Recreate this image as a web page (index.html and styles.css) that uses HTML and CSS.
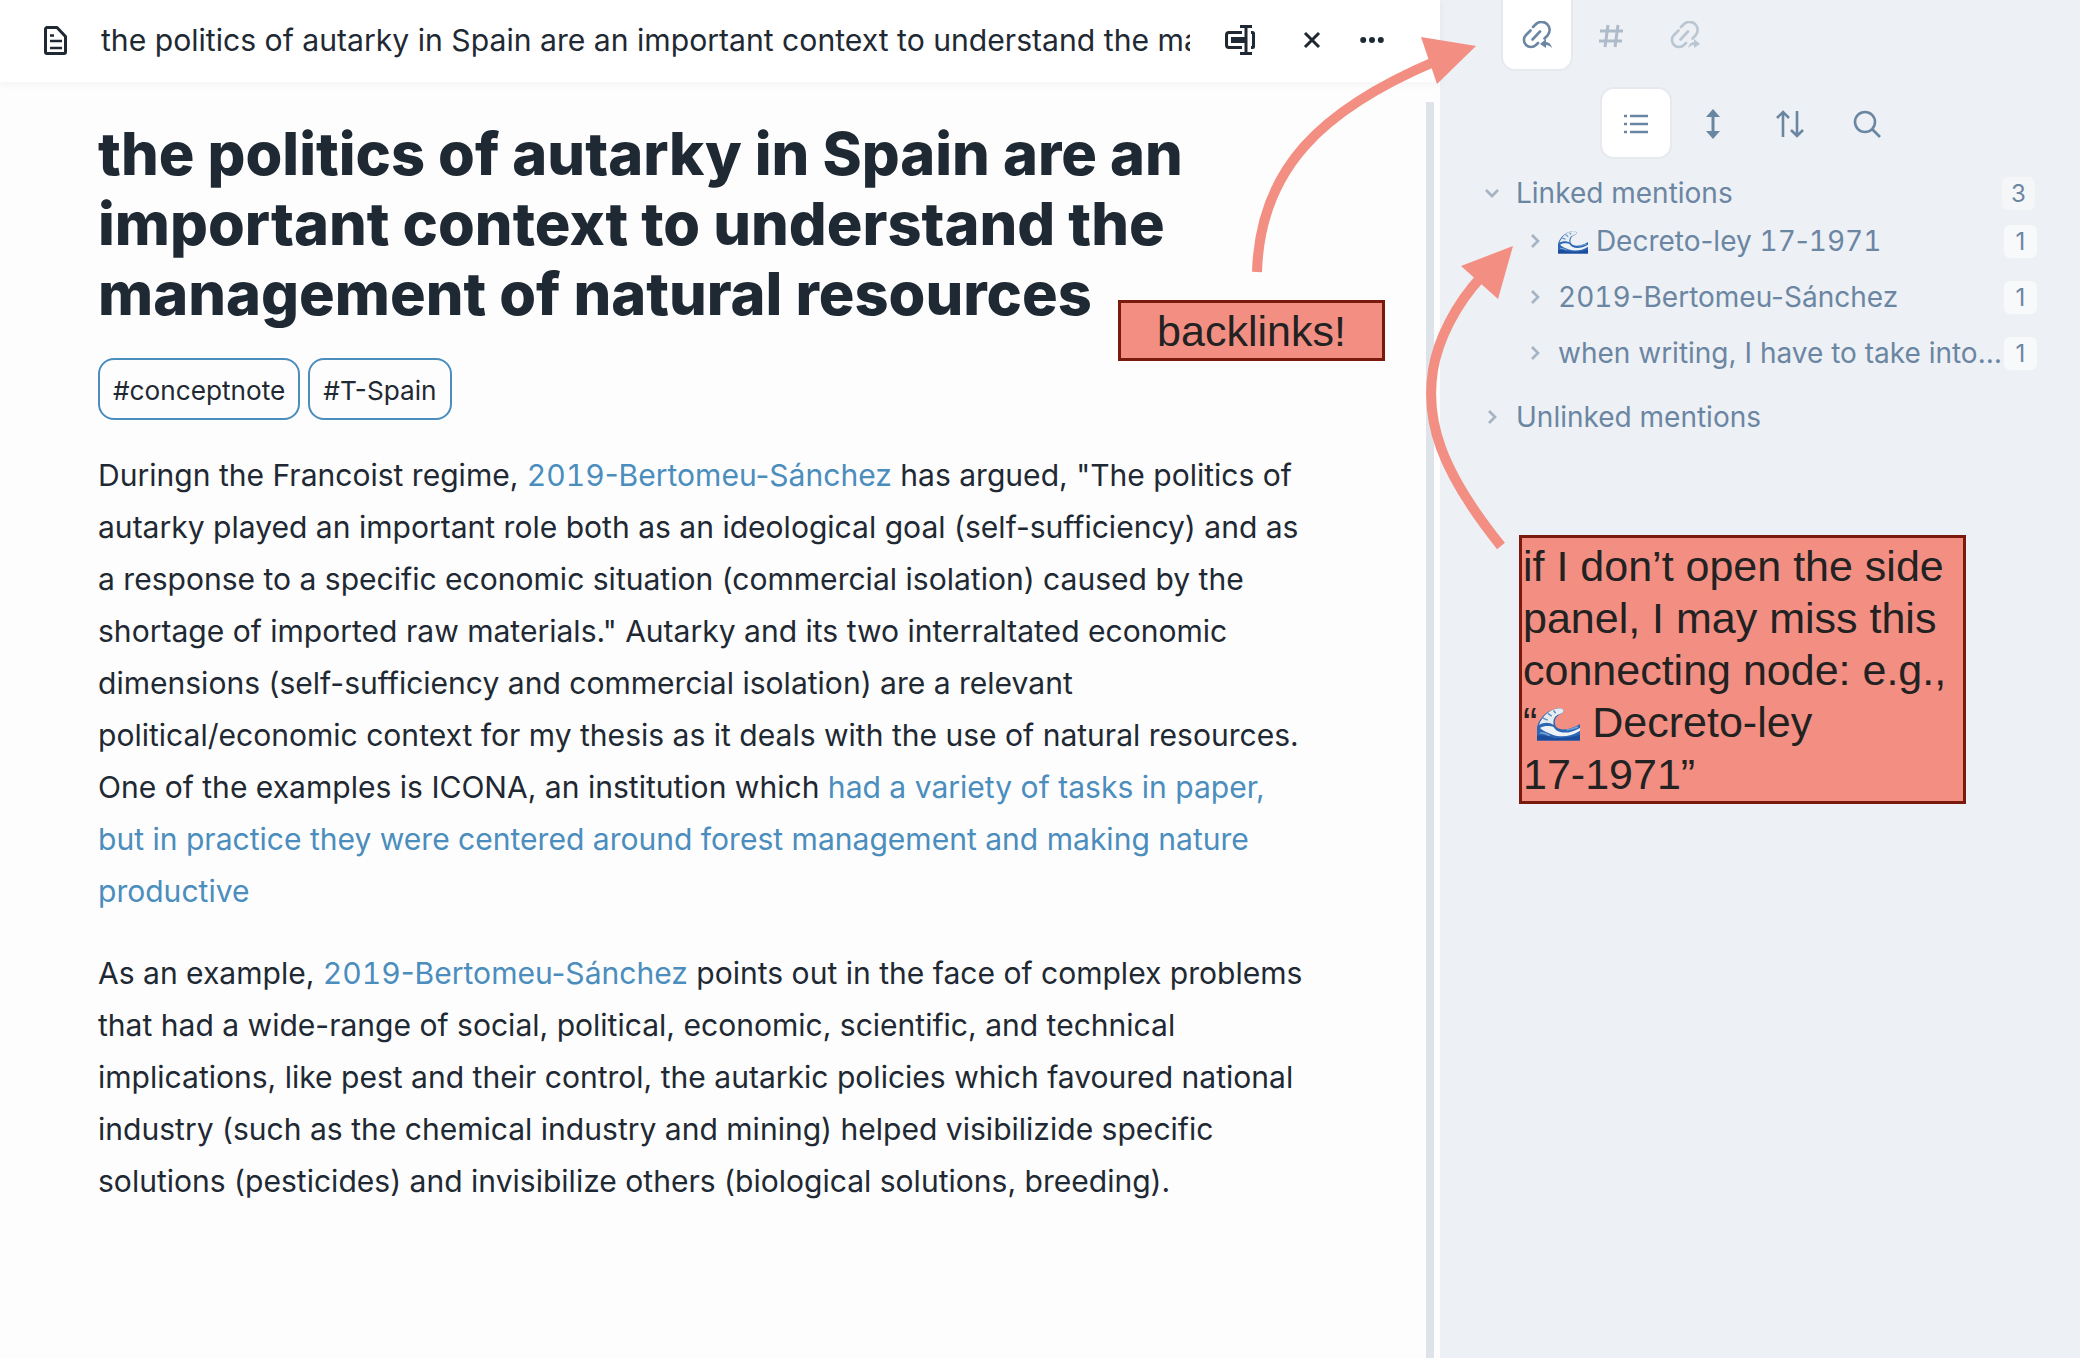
FILE: index.html
```html
<!DOCTYPE html>
<html lang="en">
<head>
    <meta charset="UTF-8">
    <title>Backlinks</title>
    <link rel="stylesheet" href="styles.css">
</head>
<body>
    <svg class="defs" width="0" height="0">
        <symbol id="wave" viewBox="0 0 44 34">
            <path d="M0 34V20C3 9 13 1 24 1c5 1 4 5 0 6-5 2-7 7-5 12 3 5 14 5 25-2v17z" fill="#2c66b4"/>
            <path d="M2 18C6 8 14 1 24 1c5 1 4 5-1 6-5 1-7 6-6 11-4-3-10-3-15 0z" fill="#e6edf1"/>
            <path d="M6 11l5 2M11 6l4 3M17 3l2 3" stroke="#5c8cc4" stroke-width="1.5"/>
            <path d="M3 21c5-3 11-2 14-1 4 7 15 8 27 1v3c-9 6-20 7-28 4-5-2-10-4-13-7z" fill="#edf3f6"/>
            <path d="M0 34v-5c6-1 10 0 16 2 8 1 18 0 28-3v6z" fill="#1b4d9c"/>
            <path d="M3 26c4 0 7 1 10 3M30 23c4 0 8-2 12-3" stroke="#7aa5d6" stroke-width="1.5" fill="none"/>
        </symbol>
    </svg>

    <div class="app">
        <main class="note">
            <header class="note-bar">
                <svg class="icon doc-icon" viewBox="0 0 23 29" fill="none" stroke="#1f2933" stroke-width="3">
                    <path d="M3 1.500h10l8.500 9V26a1.500 1.500 0 0 1-1.500 1.500H3A1.500 1.500 0 0 1 1.500 26V3A1.500 1.500 0 0 1 3 1.500z" stroke-linejoin="round"/>
                    <path d="M6 15h12M6 22h12M6 9.500h4" stroke-width="2.500"/>
                </svg>
                <div class="note-title">the politics of autarky in Spain are an important context to understand the management of natural resources</div>
                <svg class="icon reader-icon" viewBox="0 0 30 30" fill="none" stroke="#1f2933" stroke-width="3">
                    <path d="M17 7.500H4A2.500 2.500 0 0 0 1.500 10v10A2.500 2.500 0 0 0 4 22.500h13M26 7.500h1.500a1 1 0 0 1 1 1v13a1 1 0 0 1-1 1H26"/>
                    <path d="M21 1.500v27M15 1.500h12M15 28.500h12"/>
                    <rect x="6" y="12" width="14" height="6" fill="#1f2933" stroke="none"/>
                </svg>
                <svg class="icon close-icon" viewBox="0 0 18 18" fill="none" stroke="#1f2933" stroke-width="3">
                    <path d="M2 2l14 14M16 2L2 16"/>
                </svg>
                <svg class="icon more-icon" viewBox="0 0 24 8" fill="#1f2933">
                    <circle cx="3.200" cy="4" r="3"/><circle cx="12" cy="4" r="3"/><circle cx="20.800" cy="4" r="3"/>
                </svg>
            </header>

            <article class="note-body">
                <h1>the politics of autarky in Spain are an important context to understand the management of natural resources</h1>
                <div class="tags">
                    <span class="tag">#conceptnote</span>
                    <span class="tag">#T-Spain</span>
                </div>
                <p>Duringn the Francoist regime, <a href="#"><span class="num">2019</span>-Bertomeu-Sánchez</a> has argued, "The politics of autarky played an important role both as an ideological goal (self-sufficiency) and as a response to a specific economic situation (commercial isolation) caused by the shortage of imported raw materials." Autarky and its two interraltated economic dimensions (self-sufficiency and commercial isolation) are a relevant political/economic context for my thesis as it deals with the use of natural resources. One of the examples is ICONA, an institution which <a href="#">had a variety of tasks in paper, but in practice they were centered around forest management and making nature productive</a></p>
                <p>As an example, <a href="#"><span class="num">2019</span>-Bertomeu-Sánchez</a> points out in the face of complex problems that had a wide-range of social, political, economic, scientific, and technical implications, like pest and their control, the autarkic policies which favoured national industry (such as the chemical industry and mining) helped visibilizide specific solutions (pesticides) and invisibilize others (biological solutions, breeding).</p>
            </article>
            <div class="scroll-thumb"></div>
        </main>

        <aside class="side">
            <nav class="side-tabs">
                <button class="tool active">
                    <svg class="icon link-icon" viewBox="0 0 30 30" fill="none" stroke="#6b86a3" stroke-width="2.600" stroke-linecap="round">
                        <path d="M8.500 9.500L4 14a7 7 0 0 0 10 10l2-2M11 6l2.500-2.500a8 8 0 0 1 12 11l-3 3M10.500 18.500l7.500-8"/>
                        <path d="M18 23l6-5v3c3 0 5 2 6 6-2-2-4-3-6-3v3z" fill="#6b86a3" stroke="none"/>
                    </svg>
                </button>
                <button class="tool">
                    <svg class="icon hash-icon" viewBox="0 0 26 24" fill="none" stroke="#afbbc8" stroke-width="3">
                        <path d="M10 1L7 23M20 1l-3 22M2 7h23M1 17h23"/>
                    </svg>
                </button>
                <button class="tool">
                    <svg class="icon link-icon" viewBox="0 0 30 30" fill="none" stroke="#bac6d2" stroke-width="2.600" stroke-linecap="round">
                        <path d="M8.500 9.500L4 14a7 7 0 0 0 10 10l2-2M11 6l2.500-2.500a8 8 0 0 1 12 11l-3 3M10.500 18.500l7.500-8"/>
                        <path d="M30 23l-6-5v3c-3 0-5 2-6 6 2-2 4-3 6-3v3z" fill="#bac6d2" stroke="none"/>
                    </svg>
                </button>
            </nav>
            <div class="side-tools">
                <button class="tool active">
                    <svg class="icon list-icon" viewBox="0 0 26 22" fill="none" stroke="#6b86a3" stroke-width="2.400">
                        <path d="M7 3h18M7 11h18M7 19h18M1 3h3M1 11h3M1 19h3"/>
                    </svg>
                </button>
                <button class="tool">
                    <svg class="icon expand-icon" viewBox="0 0 20 32" fill="#6b86a3">
                        <path d="M10 1l7 8H3zM10 31l-7-8h14zM8.500 7h3v18h-3z"/>
                    </svg>
                </button>
                <button class="tool">
                    <svg class="icon sort-icon" viewBox="0 0 30 30" fill="none" stroke="#6b86a3" stroke-width="2.600">
                        <path d="M8 28V3M2 9l6-6 6 6M22 2v25M16 21l6 6 6-6"/>
                    </svg>
                </button>
                <button class="tool">
                    <svg class="icon search-icon" viewBox="0 0 28 28" fill="none" stroke="#6b86a3" stroke-width="2.600">
                        <circle cx="12" cy="12" r="10"/><path d="M19 19l8 8"/>
                    </svg>
                </button>
            </div>

            <section class="mentions">
                <div class="row head linked">
                    <svg class="chev" viewBox="0 0 16 16" fill="none" stroke="#a5b4c4" stroke-width="2.700"><path d="M2 5l6 6 6-6"/></svg>
                    <span class="label">Linked mentions</span>
                    <span class="count">3</span>
                </div>
                <div class="row item first">
                    <svg class="chev" viewBox="0 0 16 16" fill="none" stroke="#a5b4c4" stroke-width="2.700"><path d="M5 2l6 6-6 6"/></svg>
                    <span class="label"><svg class="wave"><use href="#wave"/></svg> Decreto-ley <span class="num">17</span>-<span class="num">1971</span></span>
                    <span class="count pale">1</span>
                </div>
                <div class="row item">
                    <svg class="chev" viewBox="0 0 16 16" fill="none" stroke="#a5b4c4" stroke-width="2.700"><path d="M5 2l6 6-6 6"/></svg>
                    <span class="label"><span class="num">2019</span>-Bertomeu-Sánchez</span>
                    <span class="count pale">1</span>
                </div>
                <div class="row item">
                    <svg class="chev" viewBox="0 0 16 16" fill="none" stroke="#a5b4c4" stroke-width="2.700"><path d="M5 2l6 6-6 6"/></svg>
                    <span class="label">when writing, I have to take into account the context</span>
                    <span class="count pale">1</span>
                </div>
                <div class="row head unlinked">
                    <svg class="chev" viewBox="0 0 16 16" fill="none" stroke="#a5b4c4" stroke-width="2.700"><path d="M5 2l6 6-6 6"/></svg>
                    <span class="label">Unlinked mentions</span>
                </div>
            </section>
        </aside>
    </div>

    <!-- annotations drawn on top of the screenshot -->
    <svg class="arrows" viewBox="0 0 2080 1358" fill="none">
        <path d="M1257 272C1260 170 1320 110 1436 61" stroke="#f28f82" stroke-width="10"/>
        <path d="M1476 46L1421 37 1437 84z" fill="#f28f82"/>
        <path d="M1501 546C1440 470 1425 420 1433 370 1438 340 1455 305 1482 276" stroke="#f28f82" stroke-width="10"/>
        <path d="M1513 246L1461 266 1498 299z" fill="#f28f82"/>
    </svg>
    <div class="callout callout-short">backlinks!</div>
    <div class="callout callout-long">if I don’t open the side panel, I may miss this connecting node: e.g., “<svg class="wave big"><use href="#wave"/></svg> Decreto-ley <span class="nowrap">17-1971”</span></div>
</body>
</html>
```

FILE: styles.css
```css
html, body {
    margin: 0;
    height: 100%;
    overflow: hidden;
}
body {
    font-family: Inter, "Noto Sans", sans-serif;
    color: #1f2933;
    background-color: #fdfdfd;
}
.defs {
    position: absolute;
}
.app {
    display: flex;
    height: 1358px;
}
.icon {
    display: block;
}
.num {
    font-variant-numeric: tabular-nums;
}

/* note */
.note {
    position: relative;
    width: 1440px;
    flex: none;
    background-color: #fdfdfd;
}
.note-bar {
    display: flex;
    align-items: center;
    height: 80px;
    padding: 0 0 2px 44px;
    background-color: #fff;
    box-shadow: 0 2px 8px rgba(30, 40, 50, 0.05);
}
.doc-icon {
    width: 23px;
    height: 29px;
    margin-right: 34px;
}
.note-title {
    width: 1089px;
    flex: none;
    font-size: 30.15px;
    white-space: nowrap;
    overflow: hidden;
}
.reader-icon {
    width: 30px;
    height: 30px;
    margin-left: 35px;
}
.close-icon {
    width: 18px;
    height: 18px;
    margin-left: 48px;
}
.more-icon {
    width: 24px;
    height: 8px;
    margin-left: 39px;
}
.note-body {
    width: 1211px;
    padding: 36px 0 0 98px;
}
h1 {
    margin: 0;
    font-size: 59.5px;
    line-height: 70px;
    font-weight: 800;
}
.tags {
    display: flex;
    gap: 8px;
    margin-top: 30px;
}
.tag {
    padding: 0 13px;
    height: 58px;
    line-height: 62px;
    border: 2px solid #4b8dbd;
    border-radius: 16px;
    font-size: 26.2px;
}
p {
    margin: 0 0 30px;
    font-size: 30.06px;
    line-height: 52px;
}
.tags + p {
    margin-top: 29px;
}
a {
    color: #4b8dbd;
    text-decoration: none;
}
.scroll-thumb {
    position: absolute;
    top: 102px;
    bottom: 0;
    right: 6px;
    width: 8px;
    background-color: #dde3e8;
}

/* side panel */
.side {
    flex: 1;
    min-width: 0;
    background-color: #edf0f4;
    color: #6b86a3;
}
.tool {
    display: flex;
    align-items: center;
    justify-content: center;
    width: 72px;
    height: 72px;
    padding: 0;
    border: 2px solid transparent;
    border-radius: 14px;
    background: none;
}
.tool.active {
    background-color: #fff;
    border-color: #e6eaef;
}
.side-tabs {
    display: flex;
    margin-left: 61px;
    gap: 2px;
}
.side-tabs .tool {
    height: 71px;
    padding-top: 2px;
    border-top: none;
    border-radius: 0 0 14px 14px;
}
.link-icon {
    width: 30px;
    height: 30px;
}
.hash-icon {
    width: 26px;
    height: 24px;
}
.side-tools {
    display: flex;
    margin: 16px 0 0 160px;
    gap: 5px;
}
.side-tools .tool {
    padding-top: 2px;
}
.list-icon {
    width: 26px;
    height: 22px;
}
.expand-icon {
    width: 20px;
    height: 32px;
}
.sort-icon {
    width: 30px;
    height: 30px;
}
.search-icon {
    width: 28px;
    height: 28px;
}
.mentions {
    padding: 14px 45px 0 0;
    font-size: 28px;
}
.row {
    display: flex;
    align-items: center;
    height: 40px;
}
.chev {
    width: 16px;
    height: 16px;
    flex: none;
}
.head .chev {
    margin: 0 16px 0 44px;
}
.item {
    margin-top: 16px;
}
.item.first {
    margin-top: 8px;
}
.item .chev {
    margin: 0 15px 0 87px;
}
.label {
    flex: 1;
    min-width: 0;
    white-space: nowrap;
    overflow: hidden;
    text-overflow: ellipsis;
}
.unlinked {
    margin-top: 24px;
}
.count {
    flex: none;
    width: 33px;
    height: 33px;
    line-height: 33px;
    text-align: center;
    font-size: 24px;
    border-radius: 6px;
    background-color: #f4f6f8;
}
.count.pale {
    margin-right: -2px;
    background-color: #f8f9fb;
}
.wave {
    width: 30px;
    height: 24px;
    vertical-align: -3px;
}
.wave.big {
    width: 43px;
    height: 34px;
    vertical-align: -4px;
}

/* annotations */
.arrows {
    position: absolute;
    top: 0;
    left: 0;
    width: 2080px;
    height: 1358px;
    pointer-events: none;
}
.callout {
    position: absolute;
    box-sizing: border-box;
    background-color: #f28f82;
    border: 3px solid #7a1a0d;
    color: #222;
    font-family: "Liberation Sans", Arial, sans-serif;
    font-size: 43px;
    line-height: 52px;
}
.callout-short {
    left: 1118px;
    top: 300px;
    width: 267px;
    height: 61px;
    text-align: center;
    line-height: 56px;
}
.callout-long {
    left: 1519px;
    top: 535px;
    width: 447px;
    height: 269px;
    padding: 2px 0 0 1px;
}
.nowrap {
    white-space: nowrap;
}
```
